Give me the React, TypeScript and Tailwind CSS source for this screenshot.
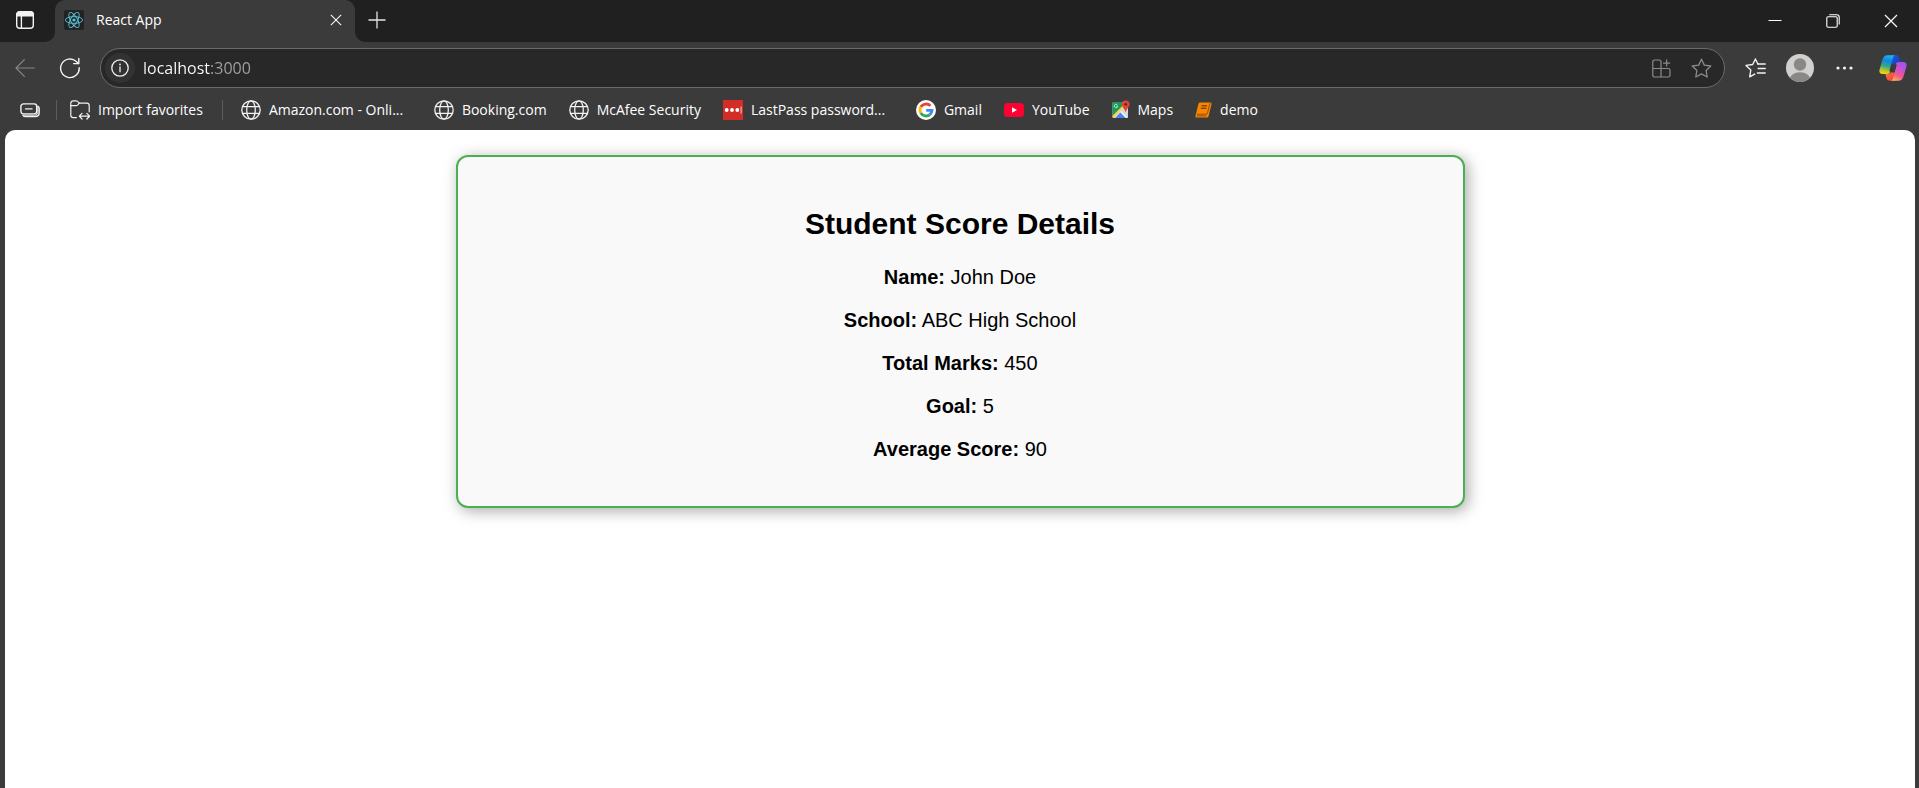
import React, { useState } from "react";

type IconProps = { className?: string };

const WorkspaceIcon = () => (
  <svg className="size-5" viewBox="0 0 20 20" fill="none" stroke="#f2f2f2" strokeWidth="1.4" aria-hidden="true">
    <rect x="1.7" y="1.9" width="16.6" height="16.4" rx="3" />
    <path d="M1.7 5.9V4.6a2.8 2.8 0 0 1 2.8-2.8h11a2.8 2.8 0 0 1 2.8 2.8v1.3z" fill="#f2f2f2" />
    <path d="M6.4 6v12.2" />
  </svg>
);

const ReactIcon = () => (
  <svg className="size-5" viewBox="0 0 20 20" fill="none" aria-hidden="true">
    <rect width="20" height="20" rx="2" fill="#222222" />
    <g stroke="#58c4dc" strokeWidth="0.9">
      <ellipse cx="10" cy="10" rx="8.6" ry="3.4" />
      <ellipse cx="10" cy="10" rx="8.6" ry="3.4" transform="rotate(60 10 10)" />
      <ellipse cx="10" cy="10" rx="8.6" ry="3.4" transform="rotate(120 10 10)" />
    </g>
    <circle cx="10" cy="10" r="1.6" fill="#58c4dc" />
  </svg>
);

const CrossIcon = ({ className = "" }: IconProps) => (
  <svg className={className} viewBox="0 0 14 14" fill="none" stroke="#f5f5f5" strokeWidth="1.3" aria-hidden="true">
    <path d="M1 1l12 12M13 1L1 13" />
  </svg>
);

const PlusIcon = () => (
  <svg className="size-[18px]" viewBox="0 0 18 18" stroke="#e6e6e6" strokeWidth="1.3" aria-hidden="true">
    <path d="M9 0.5v17M0.5 9h17" />
  </svg>
);

const MinimizeIcon = () => (
  <svg className="size-[14px]" viewBox="0 0 14 14" stroke="#ffffff" strokeWidth="1" aria-hidden="true">
    <path d="M0.5 6.5h13" />
  </svg>
);

const RestoreIcon = () => (
  <svg className="size-[14px]" viewBox="0 0 14 14" fill="none" stroke="#ffffff" strokeWidth="1.1" aria-hidden="true">
    <rect x="0.8" y="2.8" width="10.4" height="10.4" rx="1.2" />
    <path d="M3.2 0.8h7.600a2.400 2.400 0 0 1 2.400 2.400v7.400" />
  </svg>
);

const BackIcon = () => (
  <svg className="size-5" viewBox="0 0 20 20" fill="none" stroke="#868686" strokeWidth="1.2" strokeLinecap="round" strokeLinejoin="round" aria-hidden="true">
    <path d="M19.2 10H1M9.4 1.6L1 10l8.400 8.400" />
  </svg>
);

const RefreshIcon = () => (
  <svg className="size-[22px]" viewBox="0 0 22 22" fill="none" stroke="#f2f2f2" strokeWidth="1.4" strokeLinecap="round" strokeLinejoin="round" aria-hidden="true">
    <path d="M20.2 10.600a9.300 9.300 0 1 1-2.900-6.100l2 1.900" />
    <path d="M19.800 1.400v5.200h-5.200" />
  </svg>
);

const InfoIcon = () => (
  <svg className="size-[18px]" viewBox="0 0 18 18" fill="none" stroke="#f0f0f0" strokeWidth="1.3" aria-hidden="true">
    <circle cx="9" cy="9" r="8.200" />
    <path d="M9 7.800v5" strokeLinecap="round" />
    <circle cx="9" cy="5.400" r="0.900" fill="#f0f0f0" stroke="none" />
  </svg>
);

const AppsIcon = () => (
  <svg className="size-[19px]" viewBox="0 0 19 19" fill="none" stroke="#8b8b8b" strokeWidth="1.2" aria-hidden="true">
    <path d="M9 9.500V2.800A1.800 1.800 0 0 0 7.200 1H2.600A1.800 1.800 0 0 0 .8 2.800v13.400A1.800 1.800 0 0 0 2.600 18h13.600a1.800 1.800 0 0 0 1.800-1.800v-4.900a1.800 1.800 0 0 0-1.800-1.800H.8M9 9.500V18" />
    <path d="M14.600 .6v7M11.100 4.100h7" />
  </svg>
);

const StarIcon = () => (
  <svg className="size-[21px]" viewBox="0 0 21 21" fill="none" stroke="#8b8b8b" strokeWidth="1.3" strokeLinejoin="round" aria-hidden="true">
    <path d="M10.500 1.200l2.800 5.900 6.500.9-4.700 4.500 1.100 6.500-5.700-3.100L4.800 19l1.100-6.500L1.200 8l6.500-.9z" />
  </svg>
);

const FavoritesIcon = () => (
  <svg className="h-5 w-[21px]" viewBox="0 0 21 20" fill="none" stroke="#f2f2f2" strokeWidth="1.4" strokeLinecap="round" strokeLinejoin="round" aria-hidden="true">
    <path d="M12.900 6L10.400 1 7.700 6.500l-6.700.9 4.800 4.600-1.100 6.800 5-2.700" />
    <path d="M12.900 6h7.300M13.200 10.500h7M12.400 15h7.800" />
  </svg>
);

const AvatarIcon = () => (
  <svg className="size-7" viewBox="0 0 28 28" aria-hidden="true">
    <defs>
      <clipPath id="avatar-clip">
        <circle cx="14" cy="14" r="14" />
      </clipPath>
    </defs>
    <g clipPath="url(#avatar-clip)">
      <rect width="28" height="28" fill="#d2d0ce" />
      <circle cx="14" cy="10.500" r="6.200" fill="#8a8886" />
      <ellipse cx="14" cy="26" rx="10.500" ry="7.800" fill="#8a8886" />
    </g>
  </svg>
);

const DotsIcon = () => (
  <svg className="h-4 w-[17px]" viewBox="0 0 17 16" fill="#f2f2f2" aria-hidden="true">
    <circle cx="2" cy="8" r="1.600" />
    <circle cx="8.500" cy="8" r="1.600" />
    <circle cx="15" cy="8" r="1.600" />
  </svg>
);

const CopilotIcon = () => (
  <svg className="size-7" viewBox="0 0 28 28" aria-hidden="true">
    <defs>
      <linearGradient id="cp-left" x1="0.600" y1="0" x2="0.400" y2="1">
        <stop offset="0" stopColor="#22b4ea" />
        <stop offset="0.3" stopColor="#0f86e6" />
        <stop offset="0.6" stopColor="#35a884" />
        <stop offset="0.800" stopColor="#a4c33a" />
        <stop offset="1" stopColor="#fbd00f" />
      </linearGradient>
      <linearGradient id="cp-right" x1="0.700" y1="0" x2="0.300" y2="1">
        <stop offset="0" stopColor="#9a55f5" />
        <stop offset="0.400" stopColor="#d050c8" />
        <stop offset="0.700" stopColor="#f2588a" />
        <stop offset="1" stopColor="#fdab5c" />
      </linearGradient>
      <linearGradient id="cp-top" x1="0" y1="0" x2="1" y2="1">
        <stop offset="0" stopColor="#1c5fe0" />
        <stop offset="1" stopColor="#1a35b5" />
      </linearGradient>
      <linearGradient id="cp-bottom" x1="0" y1="0" x2="1" y2="1">
        <stop offset="0" stopColor="#f8772f" />
        <stop offset="1" stopColor="#f0404a" />
      </linearGradient>
    </defs>
    <path d="M11 1.200h6.200c1.900 0 2.900 1.200 3.400 3l1.100 4h-2.900c-2 0-3 1-3.600 2.800L11 9z" fill="url(#cp-top)" />
    <path d="M17 26.800h-6.200c-1.900 0-2.900-1.200-3.400-3l-1.100-4h2.900c2 0 3-1 3.600-2.800L17 19z" fill="url(#cp-bottom)" />
    <path d="M16.200 1.200H8.500C5.700 1.200 4.200 3.200 3.400 5.700L.6 15.400c-.8 2.800.5 4.600 3.100 4.600h4.600c1.700 0 2.700-1.100 3.200-2.700l-1.200-.1 3.300-12.200c.5-1.900.9-3.400 2.600-3.800z" fill="url(#cp-left)" />
    <path d="M11.800 26.800h7.700c2.800 0 4.300-2 5.100-4.500l2.800-9.700c.8-2.800-.5-4.600-3.100-4.600h-4.600c-1.700 0-2.700 1.100-3.200 2.700l1.200.1-3.300 12.200c-.5 1.900-.9 3.400-2.600 3.800z" fill="url(#cp-right)" />
    <path d="M15.200 10.300l2.300.3-2.300 8.200-2.400-.6-2-.2.800-.8z" fill="#3b3b3b" />
  </svg>
);

const CollectionIcon = () => (
  <svg className="h-[15px] w-5" viewBox="0 0 20 15" fill="none" stroke="#f2f2f2" strokeWidth="1.400" strokeLinecap="round" aria-hidden="true">
    <rect x="0.900" y="0.900" width="15.800" height="10" rx="2.600" />
    <path d="M5.600 5.900h6.400" />
    <path d="M18 3.200c.8.600 1.200 1.500 1.200 2.600v3.800c0 2.500-1.600 4-4 4H5.600c-1.100 0-2-.4-2.600-1.100" />
    <path d="M3.500 12.200h11.200c2 0 3.200-1.200 3.200-3V3.500" strokeWidth="1" />
  </svg>
);

const ImportIcon = () => (
  <svg className="size-5" viewBox="0 0 20 20" fill="none" stroke="#f2f2f2" strokeWidth="1.200" strokeLinecap="round" strokeLinejoin="round" aria-hidden="true">
    <path d="M6.400 17.600H3.200A2.400 2.400 0 0 1 .8 15.200V3.200A2.400 2.400 0 0 1 3.200.8h2.900c.6 0 1 .2 1.400.6l1.800 1.700h7.500a2.400 2.400 0 0 1 2.400 2.400v6.300" />
    <path d="M.8 5.700h5.300c.6 0 1-.2 1.400-.6l1.800-2" />
    <path d="M9.600 16.200h9.800M12 13.400l-2.700 2.800L12 19M16.900 13.400l2.700 2.800-2.700 2.800" />
  </svg>
);

const GlobeIcon = () => (
  <svg className="size-5" viewBox="0 0 20 20" fill="none" stroke="#f2f2f2" strokeWidth="1.300" aria-hidden="true">
    <circle cx="10" cy="10" r="9.200" />
    <ellipse cx="10" cy="10" rx="4.300" ry="9.200" />
    <path d="M1.700 6.600h16.600M1.700 13.400h16.600" />
  </svg>
);

const LastPassIcon = () => (
  <svg className="size-5" viewBox="0 0 20 20" aria-hidden="true">
    <rect width="20" height="20" fill="#d32d27" />
    <g fill="#ffffff">
      <circle cx="3.700" cy="10" r="1.900" />
      <circle cx="9" cy="10" r="1.900" />
      <circle cx="14.300" cy="10" r="1.900" />
      <rect x="17.600" y="6.500" width="1" height="7" opacity="0.75" />
    </g>
  </svg>
);

const GoogleIcon = () => (
  <svg className="size-5" viewBox="0 0 20 20" fill="none" strokeWidth="2.800" aria-hidden="true">
    <circle cx="10" cy="10" r="10" fill="#ffffff" />
    <path d="M14.400 5.900A6 6 0 0 0 4.800 7" stroke="#ea4335" />
    <path d="M4.800 7a6 6 0 0 0 0 6" stroke="#fbbc05" />
    <path d="M4.800 13a6 6 0 0 0 9.050 1.600" stroke="#34a853" />
    <path d="M13.850 14.600a6 6 0 0 0 2.150-4.200H10.200" stroke="#4285f4" />
  </svg>
);

const YouTubeIcon = () => (
  <svg className="h-[14px] w-5" viewBox="0 0 20 14" aria-hidden="true">
    <rect width="20" height="14" rx="3.500" fill="#ff0033" />
    <path d="M8 4.200v5.600L13 7z" fill="#ffffff" />
  </svg>
);

const MapsIcon = () => (
  <svg className="h-5 w-[18px]" viewBox="0 0 18 20" aria-hidden="true">
    <defs>
      <clipPath id="maps-clip">
        <rect x="0.500" y="2" width="15.500" height="16" rx="1.500" />
      </clipPath>
    </defs>
    <g clipPath="url(#maps-clip)">
      <rect width="18" height="20" fill="#d5d8dc" />
      <path d="M0 1h13.500v3.500L0 17z" fill="#1c9a5b" />
      <path d="M2.500 19L8.700 12 15 19z" fill="#4a86f0" />
      <path d="M-1 19L12.500 5.500" stroke="#fdd34a" strokeWidth="2.400" />
      <path d="M8.500 11.500l7.500 7.500" stroke="#f4f5f6" strokeWidth="1.600" />
    </g>
    <path d="M5.300 4.900a1.700 1.700 0 1 0 .4 1.300H4.300" fill="none" stroke="#e6f4ec" strokeWidth="0.800" />
    <path d="M13.700.4a3.900 3.900 0 0 1 3.900 3.900c0 3-3.100 4.400-3.900 8.200-.8-3.800-3.900-5.200-3.900-8.200A3.900 3.900 0 0 1 13.700.4z" fill="#e0443a" />
    <circle cx="13.700" cy="4.300" r="1.400" fill="#7c1f1b" />
  </svg>
);

const BookIcon = () => (
  <svg className="h-5 w-[17px]" viewBox="0 0 17 20" aria-hidden="true">
    <path d="M5.200 2.400h9.900c1.100 0 1.700.8 1.400 1.800l-2.900 11.700c-.2 1-1 1.600-2 1.600H1.700c-.9 0-1.500-.8-1.200-1.800L3.400 4c.2-1 .8-1.600 1.800-1.600z" fill="#fb8500" />
    <path d="M1.900 14.200h9c.9 0 1.400-.5 1.600-1.300l2.400-9.700" fill="none" stroke="#5a3c12" strokeWidth="0.700" />
    <path d="M2 15.900h9.300" stroke="#5a3c12" strokeWidth="0.700" />
    <path d="M6.400 5.800h5.700M5.800 8.200h5.700" stroke="#4a3418" strokeWidth="1" />
  </svg>
);

type Favorite = { label: string; href: string; Icon: () => React.JSX.Element; truncated?: boolean };

const favorites: Favorite[] = [
  { label: "Amazon.com - Onli...", href: "#amazon", Icon: GlobeIcon, truncated: true },
  { label: "Booking.com", href: "#booking", Icon: GlobeIcon },
  { label: "McAfee Security", href: "#mcafee", Icon: GlobeIcon },
  { label: "LastPass password...", href: "#lastpass", Icon: LastPassIcon, truncated: true },
  { label: "Gmail", href: "#gmail", Icon: GoogleIcon },
  { label: "YouTube", href: "#youtube", Icon: YouTubeIcon },
  { label: "Maps", href: "#maps", Icon: MapsIcon },
  { label: "demo", href: "#demo", Icon: BookIcon },
];

function TitleBar() {
  return (
    <div className="flex h-[42px]">
      <div className="flex w-[55px] items-center rounded-br-[10px] bg-[#202020] pb-0.5 pl-[15px]">
        <button type="button" aria-label="Tab actions">
          <WorkspaceIcon />
        </button>
      </div>
      <div className="w-[300px] bg-[#202020]">
        <div className="flex h-full items-center rounded-t-[10px] bg-[#3b3b3b] pr-[13px] pb-0.5 pl-[9px]">
          <ReactIcon />
          <span className="ml-3 flex-1 text-sm">React App</span>
          <button type="button" aria-label="Close tab">
            <CrossIcon className="size-3" />
          </button>
        </div>
      </div>
      <div className="flex flex-1 items-center justify-between rounded-bl-[10px] bg-[#202020] pr-[21px] pl-[13px]">
        <button type="button" aria-label="New tab" className="pb-0.5">
          <PlusIcon />
        </button>
        <div className="flex items-center gap-11">
          <button type="button" aria-label="Minimize">
            <MinimizeIcon />
          </button>
          <button type="button" aria-label="Restore">
            <RestoreIcon />
          </button>
          <button type="button" aria-label="Close window">
            <CrossIcon className="size-[14px]" />
          </button>
        </div>
      </div>
    </div>
  );
}

function Toolbar() {
  const [address, setAddress] = useState("localhost:3000");
  return (
    <div className="flex h-[52px] items-center pr-3 pl-[15px]">
      <button type="button" aria-label="Back">
        <BackIcon />
      </button>
      <button type="button" aria-label="Refresh" className="ml-6">
        <RefreshIcon />
      </button>
      <div className="ml-[19px] flex h-10 flex-1 items-center rounded-full border border-[#6b6b6b] bg-[#282828] pr-3 pl-1">
        <button type="button" aria-label="Site information" className="flex size-[30px] items-center justify-center rounded-full bg-[#323232]">
          <InfoIcon />
        </button>
        <input
          type="text"
          aria-label="Address"
          value={address}
          onChange={(event) => setAddress(event.target.value)}
          className="ml-2 min-w-0 flex-1 bg-linear-to-r from-white from-[68px] to-[#a3a3a3] to-[68px] bg-clip-text text-base text-transparent caret-white outline-none"
        />
        <button type="button" aria-label="Apps">
          <AppsIcon />
        </button>
        <button type="button" aria-label="Add to favorites" className="ml-5">
          <StarIcon />
        </button>
      </div>
      <button type="button" aria-label="Favorites" className="ml-5">
        <FavoritesIcon />
      </button>
      <button type="button" aria-label="Profile" className="ml-5">
        <AvatarIcon />
      </button>
      <button type="button" aria-label="Settings and more" className="ml-[22px]">
        <DotsIcon />
      </button>
      <button type="button" aria-label="Copilot" className="ml-[26px]">
        <CopilotIcon />
      </button>
    </div>
  );
}

function FavoritesBar() {
  return (
    <nav aria-label="Favorites bar" className="flex h-9 items-center pb-1 pl-5 text-sm">
      <button type="button" aria-label="Collections">
        <CollectionIcon />
      </button>
      <span className="ml-4 h-5 w-px bg-[#5c5c5c]" />
      <button type="button" className="ml-[13px] flex items-center gap-2">
        <ImportIcon />
        Import favorites
      </button>
      <span className="ml-[19px] h-5 w-px bg-[#5c5c5c]" />
      <ul className="ml-[18px] flex items-center gap-[22px]">
        {favorites.map(({ label, href, Icon, truncated }) => (
          <li key={label}>
            <a href={href} className="flex items-center gap-2 whitespace-nowrap">
              <Icon />
              <span className={truncated ? "w-[143px]" : ""}>{label}</span>
            </a>
          </li>
        ))}
      </ul>
    </nav>
  );
}

const details = [
  { label: "Name:", value: "John Doe" },
  { label: "School:", value: "ABC High School" },
  { label: "Total Marks:", value: "450" },
  { label: "Goal:", value: "5" },
  { label: "Average Score:", value: "90" },
];

function ScoreCard() {
  return (
    <section className="mx-auto w-[calc(50%+54px)] rounded-[12px] border-2 border-[#4caf50] bg-[#f9f9f9] px-[25px] pt-[50px] pb-[45px] text-center text-black shadow-[3px_3px_15px_#aaaaaa]">
      <h2 className="mb-[25px] text-[30px] leading-[34px] font-bold">Student Score Details</h2>
      <div className="flex flex-col gap-5">
        {details.map(({ label, value }) => (
          <p key={label} className="text-xl leading-[23px]">
            <strong>{label}</strong> {value}
          </p>
        ))}
      </div>
    </section>
  );
}

export default function App() {
  return (
    <div className="flex min-h-screen flex-col bg-[#3b3b3b] font-['Open_Sans',sans-serif] text-white">
      <header>
        <TitleBar />
        <Toolbar />
        <FavoritesBar />
      </header>
      <main className="mr-1 ml-[5px] flex-1 rounded-t-[10px] bg-white pt-[25px] font-['Liberation_Sans',Arial,sans-serif]">
        <ScoreCard />
      </main>
    </div>
  );
}
